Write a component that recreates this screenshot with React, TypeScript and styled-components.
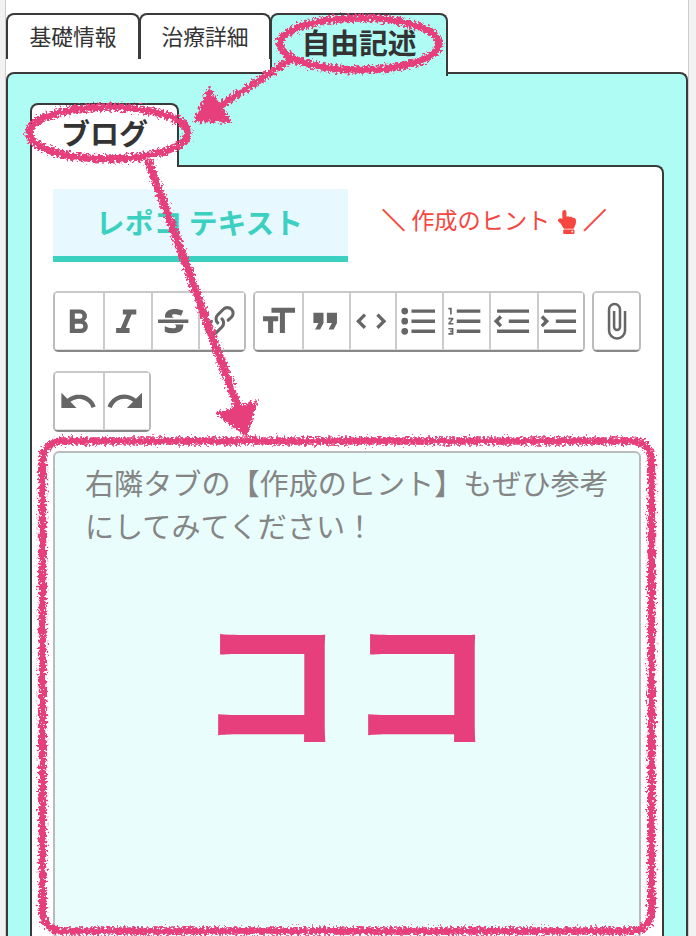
import React from 'react';
import styled, { createGlobalStyle } from 'styled-components';
import { FaHandPointUp } from 'react-icons/fa';

const GlobalStyle = createGlobalStyle`
  * { box-sizing: border-box; }
  body {
    margin: 0;
    height: 936px;
    overflow: hidden;
    background: #f2f2f2;
    color: #333;
    font-family: "Noto Sans CJK JP", "Noto Sans", sans-serif;
  }
`;

const Page = styled.main`
  position: relative;
  width: 696px;
  height: 936px;
  overflow: hidden;
  padding: 0 7px 0 5px;
`;

const Sheet = styled.div`
  height: 936px;
  padding-top: 13px;
  background: #fff;
  border: solid #ccc;
  border-width: 0 1px;
  display: flex;
  flex-direction: column;
`;

const MainTabs = styled.nav`
  display: flex;
  align-items: flex-start;
  height: 59px;
`;

const MainTab = styled.button<{ $width: number; $active?: boolean }>`
  flex: none;
  width: ${(p) => p.$width}px;
  height: ${(p) => (p.$active ? 63 : 46)}px;
  margin: 0 0 0 -1px;
  padding: 0 0 ${(p) => (p.$active ? 7 : 3)}px;
  z-index: 1;
  border: 2px solid #3a3a3a;
  border-bottom: 0;
  border-radius: 8px 8px 0 0;
  background: ${(p) => (p.$active ? '#affcf4' : '#fff')};
  color: #333;
  font-family: inherit;
  font-size: ${(p) => (p.$active ? 28.8 : 21.8)}px;
  font-weight: ${(p) => (p.$active ? 700 : 400)};
  line-height: 1;
  white-space: nowrap;
  &:first-child { margin-left: 0; }
`;

const AquaPanel = styled.section`
  flex: 1;
  padding: 29px 22px 0;
  border: 2px solid #3a3a3a;
  border-bottom: 0;
  border-radius: 8px 8px 0 0;
  background: #affcf4;
  display: flex;
  flex-direction: column;
`;

const SubTab = styled.button`
  width: 149px;
  height: 64px;
  margin: 0 0 -2px;
  padding: 0 0 8px;
  z-index: 1;
  border: 2px solid #3a3a3a;
  border-bottom: 0;
  border-radius: 8px 8px 0 0;
  background: #fff;
  color: #333;
  font-family: inherit;
  font-size: 29px;
  font-weight: 700;
  line-height: 1;
`;

const WhitePanel = styled.section`
  flex: 1;
  padding: 22px 21px 0;
  border: 2px solid #3a3a3a;
  border-bottom: 0;
  border-radius: 0 8px 0 0;
  background: #fff;
`;

const ModeRow = styled.div`
  display: flex;
  height: 73px;
`;

const TextMode = styled.div`
  width: 295px;
  padding-right: 2px;
  border-bottom: 6px solid #3bd0c0;
  background: #e7f8ff;
  color: #3bd0c0;
  font-size: 28.8px;
  font-weight: 700;
  line-height: 65px;
  text-align: center;
  white-space: nowrap;
`;

const HintLink = styled.div`
  display: flex;
  align-items: center;
  height: 65px;
  margin-left: 34px;
  color: #f6463f;
  font-size: 23.2px;
  line-height: 1;
  white-space: nowrap;
`;

const HintSlash = styled.span`
  margin-top: -3px;
  -webkit-text-stroke: 0.8px currentColor;
`;

const HintLabel = styled.span`
  margin: -3px 8px 0 6px;
`;

const HintHand = styled(FaHandPointUp)`
  width: 18px;
  height: 24px;
  margin-right: 7px;
`;

const Toolbar = styled.div`
  display: flex;
  flex-wrap: wrap;
  gap: 19px 7px;
  margin: 29px 0 19px;
`;

const ButtonGroup = styled.div`
  display: flex;
  height: 61px;
  border: 2px solid #bbb;
  border-color: #c9c9c9 #bbb #888;
  border-radius: 5px;
`;

const ToolButton = styled.button<{ $width: number }>`
  display: flex;
  align-items: center;
  justify-content: center;
  width: ${(p) => p.$width}px;
  margin: 0;
  padding: 0 1px 0 0;
  border: 0;
  background: #fff;
  border-bottom: 1px solid #ddd;
  border-radius: 3px;
  & + & { border-left: 2px solid #ccc; border-radius: 0; padding-right: 3px; }
`;

const ToolIcon = styled.svg`
  flex: none;
  width: 40.4px;
  height: 40.4px;
  fill: #666;
`;

const Editor = styled.div`
  width: 588px;
  height: 488px;
  padding: 8px 30px;
  border: 2px solid #bbb;
  border-radius: 6px;
  background: #e8fdfc;
  color: #858585;
  font-size: 29.1px;
  line-height: 42.5px;
`;

const Annotations = styled.svg`
  position: absolute;
  z-index: 2;
  inset: 0;
  pointer-events: none;
`;

const Callout = styled.div`
  position: absolute;
  left: 197px;
  top: 600px;
  color: #e63f7b;
  font-size: 147px;
  font-weight: 700;
  letter-spacing: 3px;
  line-height: 148px;
  white-space: nowrap;
`;

type Tool = { name: string; width: number; d: string };

const formatTools: Tool[] = [
  { name: 'bold', width: 48, d: 'M15.6 11.8c1-.7 1.6-1.8 1.6-2.8a4 4 0 0 0-4-4H7v14h7c2.1 0 3.7-1.7 3.7-3.8 0-1.5-.8-2.8-2.1-3.4zM10 7.5h3a1.5 1.5 0 1 1 0 3h-3v-3zm3.5 9H10v-3h3.5a1.5 1.5 0 1 1 0 3z' },
  { name: 'italic', width: 47.5, d: 'M10 5v3h2.2l-3.4 8H6v3h8v-3h-2.2l3.4-8H18V5h-8z' },
  { name: 'strike', width: 47, d: 'M12.73 14l.28.14c.26.15.45.3.57.44.12.14.18.3.18.5 0 .3-.15.56-.44.75-.3.2-.76.3-1.39.3A13.52 13.52 0 0 1 7 14.95v3.37a10.64 10.64 0 0 0 4.84.88c1.26 0 2.35-.19 3.28-.56.93-.37 1.64-.9 2.14-1.57s.74-1.45.74-2.32c0-.26-.02-.51-.06-.75h-5.21zm-5.5-4c-.08-.34-.12-.7-.12-1.1 0-1.29.52-2.3 1.58-3.02 1.05-.72 2.5-1.08 4.34-1.08 1.62 0 3.28.34 4.97 1l-1.3 2.93c-1.47-.6-2.73-.9-3.8-.9-.55 0-.96.08-1.2.26-.26.17-.38.38-.38.64 0 .27.16.52.48.74.17.12.53.3 1.05.53H7.23zM3 13h18v-2H3v2z' },
  { name: 'link', width: 46.5, d: 'M9.88 13.7a4.3 4.3 0 0 1 0-6.07l3.37-3.37a4.26 4.26 0 0 1 6.07 0 4.3 4.3 0 0 1 0 6.06l-1.96 1.72a.91.91 0 1 1-1.3-1.3l1.97-1.71a2.46 2.46 0 0 0-3.48-3.48l-3.38 3.37a2.46 2.46 0 0 0 0 3.48.91.91 0 1 1-1.3 1.3zM4.25 19.46a4.3 4.3 0 0 1 0-6.07l1.93-1.9a.91.91 0 1 1 1.3 1.3l-1.93 1.9a2.46 2.46 0 0 0 3.48 3.48l3.37-3.38c.96-.96.96-2.52 0-3.48a.91.91 0 1 1 1.3-1.3 4.3 4.3 0 0 1 0 6.07l-3.38 3.38a4.26 4.26 0 0 1-6.07 0z' },
];

const blockTools: Tool[] = [
  { name: 'heading', width: 47, d: 'M12 9v3H9v7H6v-7H3V9h9zM8 4h14v3h-6v12h-3V7H8V4z' },
  { name: 'quote', width: 47, d: 'M6 17h3l2-4V7H5v6h3zm8 0h3l2-4V7h-6v6h3z' },
  { name: 'code', width: 46, d: 'M18.2 12L15 15.2l1.4 1.4L21 12l-4.6-4.6L15 8.8l3.2 3.2zM5.8 12L9 8.8 7.6 7.4 3 12l4.6 4.6L9 15.2 5.8 12z' },
  { name: 'bullets', width: 47, d: 'M4 4a2 2 0 1 0 0 4 2 2 0 0 0 0-4zm0 6a2 2 0 1 0 0 4 2 2 0 0 0 0-4zm0 6a2 2 0 1 0 0 4 2 2 0 0 0 0-4zm4 3h14v-2H8v2zm0-6h14v-2H8v2zm0-8v2h14V5H8z' },
  { name: 'numbers', width: 47, d: 'M2 17h2v.5H3v1h1v.5H2v1h3v-4H2v1zm1-9h1V4H2v1h1v3zm-1 3h1.8L2 13.1v.9h3v-1H3.2L5 10.9V10H2v1zm5-6v2h14V5H7zm0 14h14v-2H7v2zm0-6h14v-2H7v2z' },
  { name: 'outdent', width: 47.5, d: 'M3 19h19v-2H3v2zm7-6h12v-2H10v2zm-8.3-.3l2.8 2.9L6 14.2 4 12l2-2-1.4-1.5L1 12l.7.7zM3 5v2h19V5H3z' },
  { name: 'indent', width: 46.5, d: 'M3 19h19v-2H3v2zm7-6h12v-2H10v2zm-6.9-1L1 14.2l1.4 1.4L6 12l-.7-.7-2.8-2.8L1 9.9 3.1 12zM3 5v2h19V5H3z' },
];

const fileTools: Tool[] = [
  { name: 'attach', width: 45, d: 'M16.5 6v11.5a4 4 0 1 1-8 0V5a2.5 2.5 0 0 1 5 0v10.5a1 1 0 1 1-2 0V6H10v9.5a2.5 2.5 0 0 0 5 0V5a4 4 0 1 0-8 0v12.5a5.5 5.5 0 0 0 11 0V6h-1.5z' },
];

const historyTools: Tool[] = [
  { name: 'undo', width: 48, d: 'M12.5 8c-2.6 0-5 1-6.9 2.6L2 7v9h9l-3.6-3.6A8 8 0 0 1 20 16l2.4-.8a10.5 10.5 0 0 0-10-7.2z' },
  { name: 'redo', width: 46, d: 'M18.4 10.6a10.5 10.5 0 0 0-16.9 4.6L4 16a8 8 0 0 1 12.7-3.6L13 16h9V7l-3.6 3.6z' },
];

const Tools = ({ items }: { items: Tool[] }) => (
  <ButtonGroup>
    {items.map((t) => (
      <ToolButton key={t.name} $width={t.width} aria-label={t.name}>
        <ToolIcon viewBox="0 0 24 24"><path d={t.d} /></ToolIcon>
      </ToolButton>
    ))}
  </ButtonGroup>
);

const Crayon = () => (
  <Annotations width="696" height="936" viewBox="0 0 696 936">
    <defs>
      <filter id="crayon" filterUnits="userSpaceOnUse" x="0" y="0" width="696" height="936" colorInterpolationFilters="sRGB">
        <feTurbulence type="fractalNoise" baseFrequency="0.42" numOctaves="2" seed="4" result="grain" />
        <feDisplacementMap in="SourceGraphic" in2="grain" scale="10" xChannelSelector="R" yChannelSelector="G" />
      </filter>
    </defs>
    <g filter="url(#crayon)" fill="none" stroke="#e63f7b">
      <ellipse cx="359.5" cy="44" rx="79.5" ry="26" strokeWidth="7.5" />
      <ellipse cx="108.5" cy="133" rx="79.5" ry="26" strokeWidth="7.5" />
      <path d="M293 58L213 110" strokeWidth="7" />
      <path d="M209 90L196 120L229 121Z" fill="#e63f7b" strokeWidth="4" />
      <path d="M148 160L239 410" strokeWidth="8" />
      <path d="M219 414L255 403L246 434Z" fill="#e63f7b" strokeWidth="4" />
      <rect x="42.5" y="441" width="609" height="490" rx="19" strokeWidth="7.5" />
    </g>
  </Annotations>
);

export default function App() {
  return (
    <>
      <GlobalStyle />
      <Page>
        <Sheet>
          <MainTabs>
            <MainTab $width={134}>基礎情報</MainTab>
            <MainTab $width={132}>治療詳細</MainTab>
            <MainTab $width={178} $active>自由記述</MainTab>
          </MainTabs>
          <AquaPanel>
            <SubTab>ブログ</SubTab>
            <WhitePanel>
              <ModeRow>
                <TextMode>レポコ テキスト</TextMode>
                <HintLink>
                  <HintSlash>＼</HintSlash>
                  <HintLabel>作成のヒント</HintLabel>
                  <HintHand />
                  <HintSlash>／</HintSlash>
                </HintLink>
              </ModeRow>
              <Toolbar>
                <Tools items={formatTools} />
                <Tools items={blockTools} />
                <Tools items={fileTools} />
                <Tools items={historyTools} />
              </Toolbar>
              <Editor>右隣タブの【作成のヒント】もぜひ参考にしてみてください！</Editor>
            </WhitePanel>
          </AquaPanel>
        </Sheet>
        <Crayon />
        <Callout>ココ</Callout>
      </Page>
    </>
  );
}
